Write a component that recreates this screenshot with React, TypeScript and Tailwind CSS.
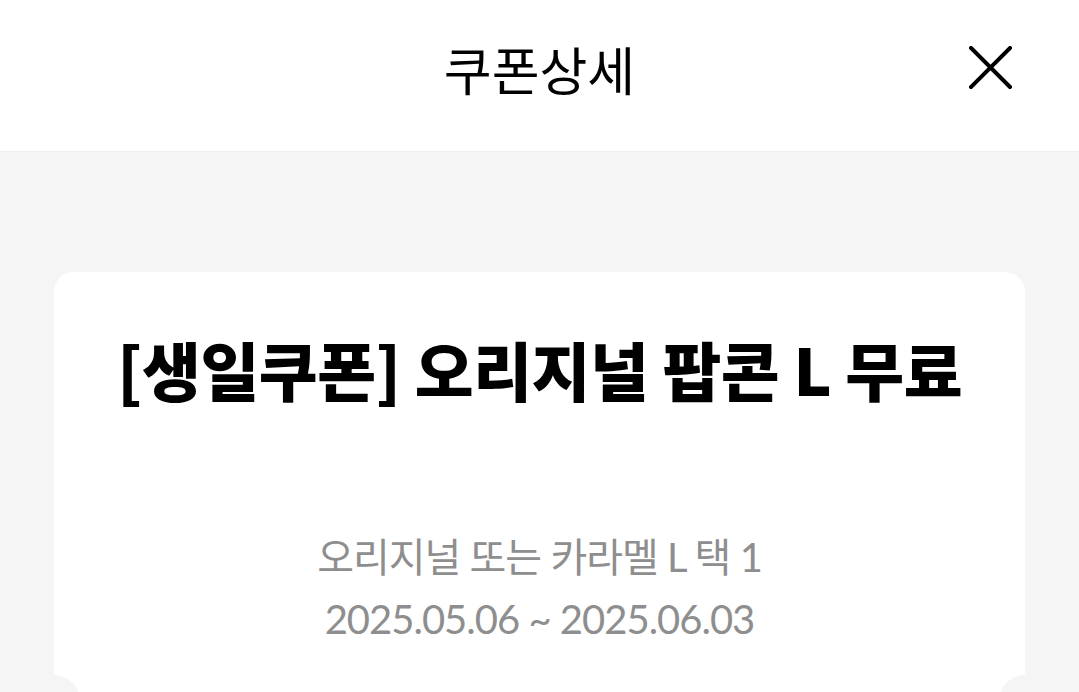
import React from "react";

export default function App() {
  return (
    <div className="w-[1079px] h-[692px] overflow-hidden bg-[#f5f5f5]" style={{ fontFamily: "'Noto Sans CJK KR', sans-serif" }}>
      <header className="h-[152px] bg-white border-b border-[#efefef] grid grid-cols-[1fr_auto_1fr] items-center">
        <div />
        <h1 className="text-[52px] leading-none font-normal text-black pb-[14px]">쿠폰상세</h1>
        <div className="flex justify-end pr-[67px]">
          <svg width="43" height="43" viewBox="0 0 43 43" className="mb-[17px]">
            <path d="M2 2 L41 41 M41 2 L2 41" stroke="#000" strokeWidth="4" strokeLinecap="square" fill="none" />
          </svg>
        </div>
      </header>
      <main className="px-[54px] pt-[120px]">
        <section className="relative bg-white rounded-[20px] h-[600px] flex flex-col items-center">
          <h2 className="mt-[58px] text-[64px] leading-[76px] font-extrabold text-black tracking-[-0.5px]">
            [생일쿠폰] 오리지널 팝콘 L 무료
          </h2>
          <div className="mt-[120px] flex flex-col items-center text-[#8e8e8e] text-[40px] leading-[62px] tracking-[-1px]" style={{ fontFamily: "Lato, 'Noto Sans CJK KR', sans-serif" }}>
            <p>오리지널 또는 카라멜 L 택 1</p>
            <p>2025.05.06 ~ 2025.06.03</p>
          </div>
          <div className="absolute left-[-26px] top-[403px] w-[52px] h-[52px] rounded-full bg-[#f5f5f5]" />
          <div className="absolute right-[-26px] top-[403px] w-[52px] h-[52px] rounded-full bg-[#f5f5f5]" />
        </section>
      </main>
    </div>
  );
}
